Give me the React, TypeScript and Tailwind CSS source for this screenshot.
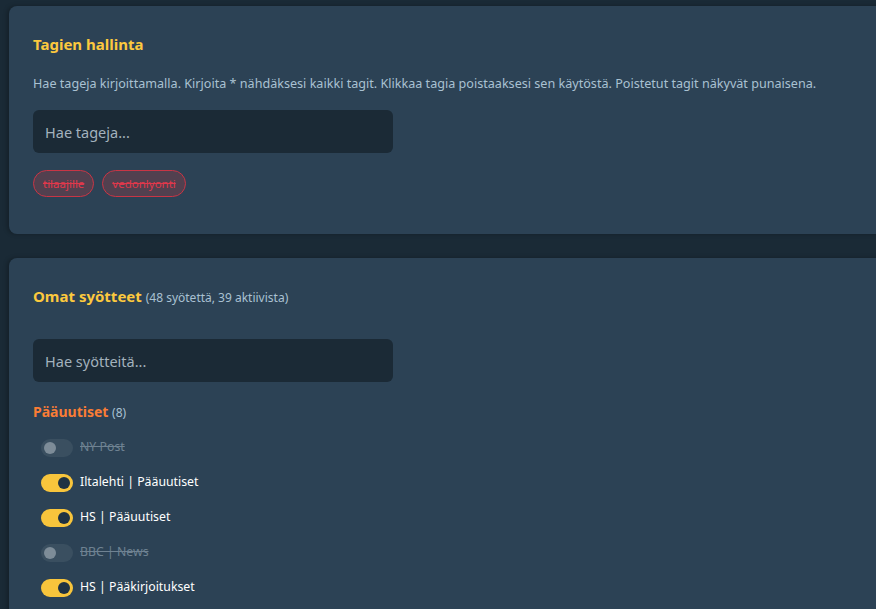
import { useState } from 'react';

const font = { fontFamily: '"Segoe UI", "Noto Sans", "Open Sans", sans-serif' };

const initialFeeds = [
  { name: 'NY Post', active: false },
  { name: 'Iltalehti | Pääuutiset', active: true },
  { name: 'HS | Pääuutiset', active: true },
  { name: 'BBC | News', active: false },
  { name: 'HS | Pääkirjoitukset', active: true },
];

function Toggle({ on, onClick }: { on: boolean; onClick: () => void }) {
  return (
    <button
      type="button"
      onClick={onClick}
      className={
        on
          ? 'flex h-[18px] w-[32px] shrink-0 items-center justify-end rounded-full bg-[#f8c53c] px-[3px]'
          : 'flex h-[18px] w-[32px] shrink-0 items-center justify-start rounded-full bg-[#3a4f60] px-[3px]'
      }
    >
      <span
        className={
          on
            ? 'h-[12px] w-[12px] rounded-full bg-[#1f3243]'
            : 'h-[12px] w-[12px] rounded-full bg-[#7d8c98]'
        }
      />
    </button>
  );
}

export default function App() {
  const [feeds, setFeeds] = useState(initialFeeds);

  return (
    <div
      className="h-[609px] w-[876px] overflow-hidden bg-[#1a2a36] pl-[9px] pt-[6px]"
      style={font}
    >
      <div className="flex w-[900px] flex-col gap-[24px]">
        <section className="h-[228px] rounded-[8px] bg-[#2c4255] px-[24px] pt-[29px] shadow-[-2px_0_4px_rgba(0,0,0,0.25)]">
          <h2 className="text-[15px] font-bold leading-[18px] text-[#fcc93e]">Tagien hallinta</h2>
          <p className="mt-[23px] text-[12.6px] leading-[16px] text-[#a9c1d2]">
            Hae tageja kirjoittamalla. Kirjoita * nähdäksesi kaikki tagit. Klikkaa tagia poistaaksesi sen käytöstä. Poistetut tagit näkyvät punaisena.
          </p>
          <input
            placeholder="Hae tageja..."
            className="mt-[18px] h-[43px] w-[360px] rounded-[6px] bg-[#1b2a36] px-[12px] text-[14.5px] text-[#c9d6df] outline-none placeholder:text-[#a3b2bd]"
          />
          <div className="mt-[17px] flex gap-[8px]">
            {['tilaajille', 'vedonlyonti'].map((t) => (
              <span
                key={t}
                className="flex h-[27px] items-center rounded-full border border-[#c93545] bg-[#52404f] px-[9px] text-[11.5px] text-[#e0384b] line-through"
              >
                {t}
              </span>
            ))}
          </div>
        </section>

        <section className="h-[400px] rounded-[8px] bg-[#2c4255] px-[24px] pt-[29px] shadow-[-2px_0_4px_rgba(0,0,0,0.25)]">
          <h2 className="text-[15px] font-bold leading-[18px] text-[#fcc93e]">
            Omat syötteet{' '}
            <span className="text-[12px] font-normal text-[#a9c1d2]">(48 syötettä, 39 aktiivista)</span>
          </h2>
          <input
            placeholder="Hae syötteitä..."
            className="mt-[32px] h-[43px] w-[360px] rounded-[6px] bg-[#1b2a36] px-[12px] text-[14.5px] text-[#c9d6df] outline-none placeholder:text-[#a3b2bd]"
          />
          <h3 className="mt-[21px] text-[14px] font-bold leading-[18px] text-[#fa7d35]">
            Pääuutiset <span className="text-[12px] font-normal text-[#a9c1d2]">(8)</span>
          </h3>
          <ul className="mt-[8px] flex flex-col pl-[8px]">
            {feeds.map((f, i) => (
              <li key={f.name} className="flex h-[35px] items-center gap-[7px]">
                <Toggle
                  on={f.active}
                  onClick={() =>
                    setFeeds(feeds.map((x, j) => (j === i ? { ...x, active: !x.active } : x)))
                  }
                />
                <span
                  className={
                    f.active
                      ? 'text-[12.3px] text-[#ffffff]'
                      : 'text-[12.3px] text-[#6f8292] line-through'
                  }
                >
                  {f.name}
                </span>
              </li>
            ))}
          </ul>
        </section>
      </div>
    </div>
  );
}
